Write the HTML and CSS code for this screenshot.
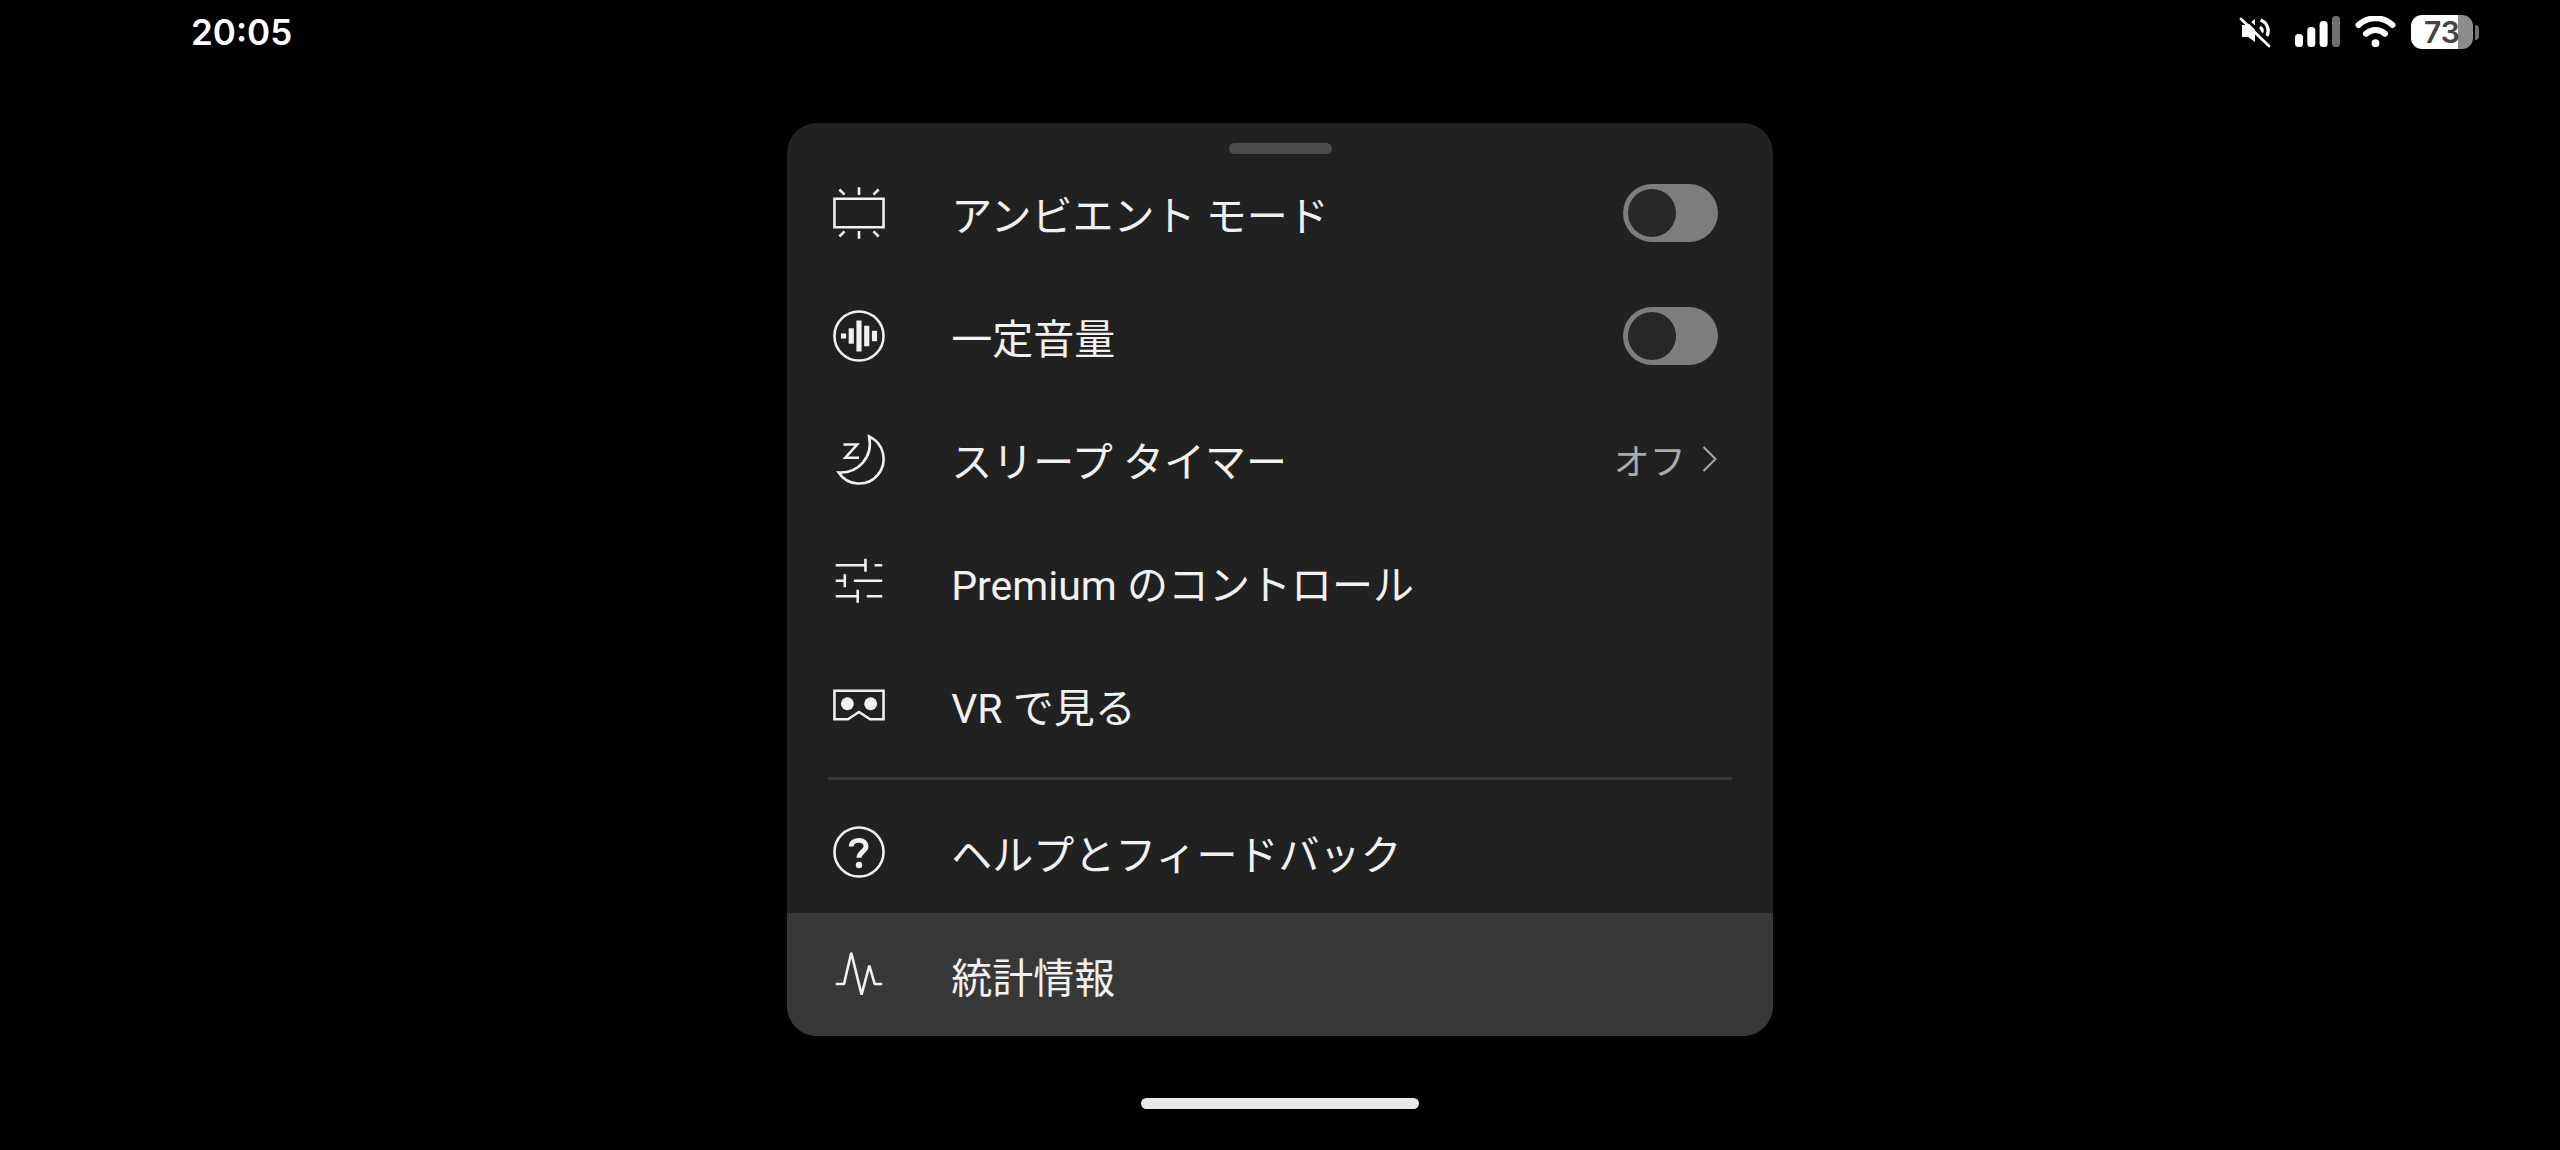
FILE: index.html
```html
<!DOCTYPE html>
<html lang="ja">
<head>
    <meta charset="UTF-8">
    <meta name="viewport" content="width=device-width, initial-scale=1">
    <title>設定</title>
    <link rel="stylesheet" href="styles.css">
</head>
<body>
    <header class="status-bar">
        <time class="clock">20:05</time>
        <div class="status-icons">
            <svg class="mute" viewBox="0 0 34 34" aria-hidden="true">
                <path d="M4 10h5L17 4V27L10 22H4z" fill="#fff"/>
                <path d="M22.500 5A11.500 11.500 0 0 1 29 21M22 12q4 3 1 7" fill="none" stroke="#fff" stroke-width="3.200"/>
                <path d="M5 1L34 29" stroke="#000" stroke-width="3"/>
                <path d="M3 4L31 31" stroke="#fff" stroke-width="2.800" stroke-linecap="round"/>
            </svg>
            <svg class="signal" viewBox="0 0 45 32" aria-hidden="true">
                <g fill="#fff">
                    <rect x="0" y="18" width="8" height="13" rx="3.500"/>
                    <rect x="12.300" y="11" width="8" height="20" rx="3.500"/>
                    <rect x="24.600" y="5" width="8" height="26" rx="3.500"/>
                </g>
                <rect x="37" y="0" width="8" height="31" rx="3.500" fill="#707070"/>
            </svg>
            <svg class="wifi" viewBox="0 0 41 32" aria-hidden="true">
                <g fill="none" stroke="#fff" stroke-width="6" stroke-linecap="round">
                    <path d="M3.500 9A25 25 0 0 1 37.500 9"/>
                    <path d="M11 17.800A14 14 0 0 1 30 17.800"/>
                </g>
                <circle cx="20.500" cy="27.200" r="3.900" fill="#fff"/>
            </svg>
            <div class="battery"><span class="battery-level">73</span></div>
        </div>
    </header>

    <main class="sheet">
        <div class="handle"></div>
        <ul class="menu">
            <li>
                <label class="row">
                    <svg class="icon" viewBox="0 0 24 24" aria-hidden="true">
                        <path d="M2.500 6.500h19v11h-19zM12 2v3M12 19v3M4.400 2.900l2 2M19.600 2.900l-2 2M4.400 21.100l2-2M19.600 21.100l-2-2"/>
                    </svg>
                    <span class="title">アンビエント モード</span>
                    <input class="toggle" type="checkbox">
                </label>
            </li>
            <li>
                <label class="row">
                    <svg class="icon" viewBox="0 0 24 24" aria-hidden="true">
                        <circle cx="12" cy="12" r="9.500"/>
                        <path class="solid" d="M5 11h2v2H5zM8 9h2v6H8zM11 6h2v12h-2zM14 8h2v8h-2zM17 10h2v4h-2z"/>
                    </svg>
                    <span class="title">一定音量</span>
                    <input class="toggle" type="checkbox">
                </label>
            </li>
            <li>
                <button class="row" type="button">
                    <svg class="icon" viewBox="0 0 24 24" aria-hidden="true">
                        <path d="M15.900 3.300A9.500 9.500 0 1 1 4.100 17.200C11.500 17.600 17.600 11.500 15.900 3.300z"/>
                        <path d="M6 6.400h5.300L6.700 11.500H12"/>
                    </svg>
                    <span class="title">スリープ タイマー</span>
                    <span class="value">オフ</span>
                    <svg class="chevron" viewBox="0 0 16 28" aria-hidden="true">
                        <path d="M1.500 2L13.500 14L1.500 26"/>
                    </svg>
                </button>
            </li>
            <li>
                <button class="row" type="button">
                    <svg class="icon" viewBox="0 0 24 24" aria-hidden="true">
                        <path d="M3 5.500h11.500M14.500 3v5M18 5.500h3M3 11.500h3.500M6.500 9v5M10 11.500h11M3 17.500h8.500M11.500 15v5M15 17.500h6"/>
                    </svg>
                    <span class="title">Premium のコントロール</span>
                </button>
            </li>
            <li>
                <button class="row" type="button">
                    <svg class="icon" viewBox="0 0 24 24" aria-hidden="true">
                        <path d="M2.500 6.500h19v11h-5.200L12 14.700l-4.300 2.800H2.500z"/>
                        <circle class="solid" cx="7.500" cy="11.500" r="2.500"/>
                        <circle class="solid" cx="16.500" cy="11.500" r="2.500"/>
                    </svg>
                    <span class="title">VR で見る</span>
                </button>
            </li>
        </ul>
        <hr class="divider">
        <ul class="menu">
            <li>
                <button class="row" type="button">
                    <svg class="icon" viewBox="0 0 24 24" aria-hidden="true">
                        <circle cx="12" cy="12" r="9.500"/>
                        <path d="M9 9.900C9 8.400 10.300 7.500 12 7.500S14.700 8.500 14.700 9.900C14.700 11.700 12 12 12 14.200" stroke-width="1.900"/>
                        <circle class="solid" cx="12" cy="17" r="1.250"/>
                    </svg>
                    <span class="title">ヘルプとフィードバック</span>
                </button>
            </li>
            <li>
                <button class="row active" type="button">
                    <svg class="icon" viewBox="0 0 24 24" aria-hidden="true">
                        <path d="M3 15.500h3.200L9 3.400l4 16.200 3-11.200 2.100 7.100H21" stroke-linejoin="bevel"/>
                    </svg>
                    <span class="title">統計情報</span>
                </button>
            </li>
        </ul>
    </main>

    <footer class="home-bar"></footer>
</body>
</html>
```
FILE: styles.css
```css
* {
    box-sizing: border-box;
}

body {
    margin: 0;
    min-height: 100vh;
    display: flex;
    flex-direction: column;
    align-items: center;
    background: #000;
    color: #f1f1f1;
    font-family: Roboto, "Noto Sans CJK JP", sans-serif;
}

/* status bar */
.status-bar {
    width: 100%;
    height: 63px;
    padding: 0 81px 0 191px;
    display: flex;
    justify-content: space-between;
    align-items: center;
    color: #fff;
    font-family: Inter, sans-serif;
    font-weight: 600;
}

.clock {
    font-size: 35px;
}

.status-icons {
    display: flex;
    align-items: center;
    gap: 15px;
}

.mute {
    width: 34px;
    height: 34px;
    margin-right: 8px;
}

.signal {
    width: 45px;
    height: 32px;
}

.wifi {
    width: 41px;
    height: 32px;
}

.battery {
    position: relative;
    width: 62px;
    height: 34px;
    margin-right: 6px;
    display: flex;
    align-items: center;
    justify-content: center;
    border-radius: 11px;
    background: linear-gradient(to right, #fff 75%, #8c8c8c 75%);
}

.battery::after {
    content: "";
    position: absolute;
    left: 64px;
    top: 10px;
    width: 4px;
    height: 15px;
    border-radius: 0 4px 4px 0;
    background: #707070;
}

.battery-level {
    color: #444;
    font-size: 30px;
    line-height: 34px;
}

/* bottom sheet */
.sheet {
    width: 38.5%;
    margin-top: 60px;
    padding-top: 20px;
    border-radius: 30px;
    overflow: hidden;
    background: #212121;
}

.handle {
    width: 103px;
    height: 11px;
    margin: 0 auto -3px;
    border-radius: 6px;
    background: #4d4d4d;
}

.menu {
    margin: 0;
    padding: 0;
    list-style: none;
}

.row {
    width: 100%;
    height: 123px;
    padding: 0 55px 0 41px;
    display: flex;
    align-items: center;
    border: 0;
    background: none;
    color: inherit;
    font-family: inherit;
    font-size: 41px;
    text-align: left;
    cursor: pointer;
}

.row.active {
    background: #383838;
}

.icon {
    flex: none;
    width: 62px;
    height: 62px;
    margin-right: 61px;
    fill: none;
    stroke: #f1f1f1;
    stroke-width: 1;
}

.icon .solid {
    fill: #f1f1f1;
    stroke: none;
}

.title {
    flex: 1;
    white-space: nowrap;
}

.value {
    color: #aaa;
    font-size: 36px;
}

.chevron {
    width: 16px;
    height: 28px;
    margin-left: 16px;
    fill: none;
    stroke: #aaa;
    stroke-width: 2;
}

.toggle {
    appearance: none;
    flex: none;
    width: 95px;
    height: 58px;
    margin: 0;
    padding: 5px;
    border-radius: 29px;
    background: #7d7d7d;
    cursor: pointer;
}

.toggle::before {
    content: "";
    display: block;
    width: 48px;
    height: 48px;
    border-radius: 50%;
    background: #282828;
}

.toggle:checked::before {
    margin-left: auto;
}

.divider {
    height: 3px;
    margin: 11px 41px 10px;
    border: 0;
    background: #383838;
}

/* gesture bar */
.home-bar {
    width: 278px;
    height: 11px;
    margin-top: auto;
    margin-bottom: 41px;
    border-radius: 6px;
    background: #e9e9e9;
}
```
